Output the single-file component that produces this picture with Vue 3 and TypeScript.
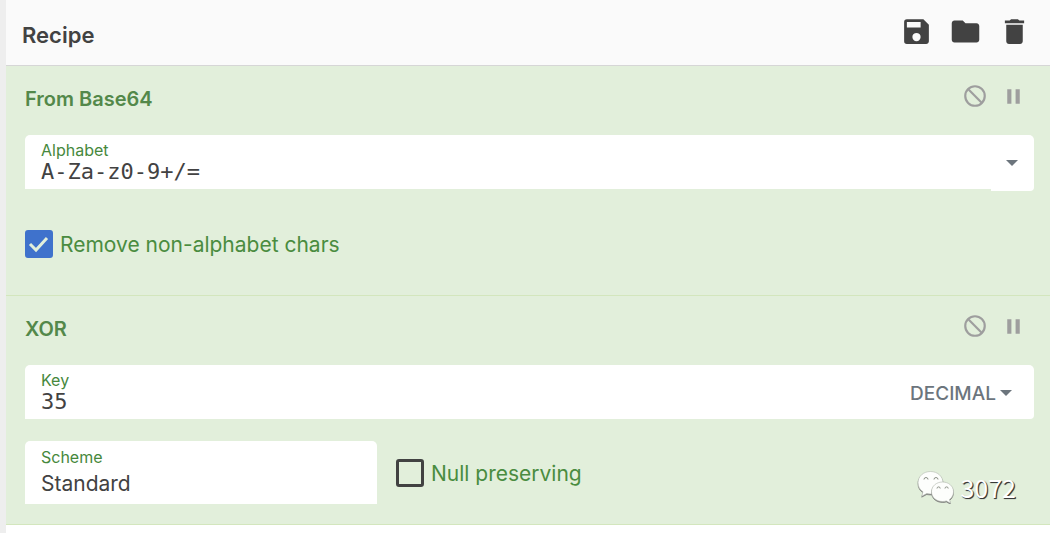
<script setup lang="ts">
import { ref } from 'vue'

const alphabet = ref('A-Za-z0-9+/=')
const removeChars = ref(true)
const key = ref('35')
const scheme = ref('Standard')
const nullPreserving = ref(false)
</script>

<template>
  <main class="recipe">
    <header class="title-bar">
      <h1>Recipe</h1>
      <div class="tools">
        <button type="button" aria-label="Save recipe">
          <svg viewBox="0 0 24 24"><path d="M17 3H5a2 2 0 0 0-2 2v14a2 2 0 0 0 2 2h14c1.100 0 2-.9 2-2V7l-4-4zm-5 16a3 3 0 1 1 0-6 3 3 0 0 1 0 6zm3-10H5V5h10v4z" /></svg>
        </button>
        <button type="button" aria-label="Load recipe">
          <svg viewBox="0 0 24 24"><path d="M10 4H4c-1.100 0-2 .9-2 2v12c0 1.100.9 2 2 2h16c1.100 0 2-.9 2-2V8c0-1.100-.9-2-2-2h-8l-2-2z" /></svg>
        </button>
        <button type="button" aria-label="Clear recipe">
          <svg viewBox="0 0 24 24"><path d="M6 19c0 1.100.9 2 2 2h8c1.100 0 2-.9 2-2V7H6v12zM19 4h-3.500l-1-1h-5l-1 1H5v2h14V4z" /></svg>
        </button>
      </div>
    </header>

    <section class="operation first">
      <div class="op-head">
        <h2>From Base64</h2>
        <div class="op-tools">
          <button type="button" aria-label="Disable operation">
            <svg viewBox="0 0 24 24"><circle cx="12" cy="12" r="9" /><path d="M5.600 5.600l12.800 12.800" /></svg>
          </button>
          <button type="button" aria-label="Set breakpoint">
            <svg class="solid" viewBox="0 0 24 24"><path d="M6 5h4v14H6zM14 5h4v14h-4z" /></svg>
          </button>
        </div>
      </div>
      <div class="field-row">
        <div class="field">
          <label for="alphabet">Alphabet</label>
          <input id="alphabet" v-model="alphabet" class="mono" type="text" spellcheck="false" />
        </div>
        <button type="button" class="menu narrow" aria-label="Choose alphabet"><span class="caret"></span></button>
      </div>
      <label class="check">
        <input v-model="removeChars" type="checkbox" />
        <svg viewBox="0 0 28 28"><path d="M5 14l6 6L22 8" /></svg>
        <span>Remove non-alphabet chars</span>
      </label>
    </section>

    <section class="operation">
      <div class="op-head">
        <h2>XOR</h2>
        <div class="op-tools">
          <button type="button" aria-label="Disable operation">
            <svg viewBox="0 0 24 24"><circle cx="12" cy="12" r="9" /><path d="M5.600 5.600l12.800 12.800" /></svg>
          </button>
          <button type="button" aria-label="Set breakpoint">
            <svg class="solid" viewBox="0 0 24 24"><path d="M6 5h4v14H6zM14 5h4v14h-4z" /></svg>
          </button>
        </div>
      </div>
      <div class="field-row">
        <div class="field">
          <label for="key">Key</label>
          <input id="key" v-model="key" class="mono" type="text" />
        </div>
        <button type="button" class="menu">DECIMAL<span class="caret"></span></button>
      </div>
      <div class="options">
        <div class="field scheme">
          <label for="scheme">Scheme</label>
          <select id="scheme" v-model="scheme">
            <option>Standard</option>
          </select>
        </div>
        <label class="check">
          <input v-model="nullPreserving" type="checkbox" />
          <svg viewBox="0 0 28 28"><path d="M5 14l6 6L22 8" /></svg>
          <span>Null preserving</span>
        </label>
      </div>
      <div class="badge">
        <svg viewBox="0 0 38 34">
          <g class="bubble">
            <path d="M13.500 1.500C6.500 1.500 1 6.300 1 12.700c0 4 1.800 7 5 9.100l-1.300 4.400 5.100-2.700c1.200.3 2.400.5 3.700.5C20.500 24 26 19 26 12.700S20.500 1.500 13.500 1.500z" />
            <path d="M25.500 12C19.200 12 14.500 16.300 14.500 21.700s4.700 9.800 11 9.800c1.300 0 2.600-.2 3.800-.6l4.200 2.300-1-3.800c2.600-1.800 4-4.600 4-7.700 0-5.500-4.700-9.700-11-9.700z" />
          </g>
          <path class="eye" d="M7 9.500a2 2 0 0 1 4 0M17 9.500a2 2 0 0 1 4 0M20 18.500a1.600 1.600 0 0 1 3.200 0M28 18.500a1.600 1.600 0 0 1 3.200 0" />
        </svg>
        <span>3072</span>
      </div>
    </section>
  </main>
</template>

<style>
body {
  background: #fff;
}
</style>

<style scoped>
* {
  box-sizing: border-box;
}
.recipe {
  min-height: 100vh;
  border-left: 6px solid #eee;
  font-family: Inter, "Liberation Sans", sans-serif;
  color: #424242;
}
button {
  display: flex;
  align-items: center;
  justify-content: center;
  padding: 0;
  border: 0;
  background: none;
  font: inherit;
  color: inherit;
}
h1,
h2 {
  margin: 0;
}
.title-bar {
  display: flex;
  align-items: center;
  justify-content: space-between;
  height: 66px;
  padding: 5px 19px 0 16px;
  border-bottom: 1px solid #d6d6d6;
  background: #fafafa;
}
h1 {
  font-size: 22px;
  line-height: 30px;
  font-weight: 600;
}
.tools {
  display: flex;
  gap: 16px;
  padding-bottom: 8px;
}
.tools svg {
  width: 33px;
  height: 33px;
  fill: #424242;
}
.operation {
  position: relative;
  padding: 18px 16px 20px 19px;
  border-bottom: 1px solid #d3e6bd;
  background: #e2efdb;
}
.first {
  height: 230px;
}
.op-head {
  display: flex;
  justify-content: space-between;
  height: 51px;
}
h2 {
  font-size: 20px;
  line-height: 30px;
  font-weight: 600;
  color: #53884a;
}
.op-tools {
  display: flex;
  gap: 13px;
  height: 24px;
  padding-right: 8px;
}
.op-tools svg {
  width: 26px;
  height: 26px;
  fill: none;
  stroke: #9e9e9e;
  stroke-width: 2;
}
.op-tools .solid {
  width: 25px;
  height: 25px;
  fill: #9e9e9e;
  stroke: none;
}
.field-row {
  display: flex;
  align-items: flex-start;
}
.field {
  flex: 1;
  display: flex;
  flex-direction: column;
  height: 54px;
  padding: 5px 16px 0;
  border-radius: 5px 0 0 0;
  background: #fff;
}
.field label {
  font-size: 16px;
  line-height: 20px;
  color: #46883c;
}
.field input,
.field select {
  width: 100%;
  height: 24px;
  padding: 0;
  border: 0;
  outline: 0;
  background: none;
  appearance: none;
  font: 21px/24px Inter, "Liberation Sans", sans-serif;
  color: #424242;
}
.field .mono {
  font: 22px/24px "DejaVu Sans Mono", "Liberation Mono", monospace;
}
.menu {
  width: 144px;
  height: 54px;
  padding: 2px 2px 0 0;
  gap: 4px;
  border-radius: 0 5px 4px 0;
  background: #fff;
  font-size: 19px;
  font-weight: 500;
  color: #6c757d;
}
.narrow {
  width: 43px;
  height: 56px;
  padding-top: 0;
}
.caret {
  border: 6px solid transparent;
  border-top-color: #6c757d;
  border-bottom: 0;
}
.check {
  position: relative;
  display: flex;
  align-items: center;
  gap: 7px;
  font-size: 21px;
  line-height: 26px;
  color: #4a8c40;
}
.check span {
  padding-top: 2px;
}
.first .check {
  width: fit-content;
  margin-top: 39px;
}
.check input {
  width: 28px;
  height: 28px;
  margin: 0;
  border: 3px solid #424242;
  border-radius: 3px;
  appearance: none;
}
.check input:checked {
  border-color: #3f72cc;
  background: #3f72cc;
}
.check svg {
  position: absolute;
  left: 0;
  width: 28px;
  height: 28px;
  fill: none;
  stroke: #e2efdb;
  stroke-width: 3;
  visibility: hidden;
}
.check input:checked + svg {
  visibility: visible;
}
.options {
  display: flex;
  align-items: center;
  gap: 19px;
  margin-top: 22px;
}
.scheme {
  flex: 0 1 352px;
  height: 63px;
  padding-top: 6px;
  gap: 5px;
  border-radius: 5px 5px 0 0;
}
.badge {
  position: absolute;
  right: 34px;
  bottom: 20px;
  display: flex;
  align-items: center;
  gap: 5px;
  font: 25px/34px "Noto Sans CJK SC", "Noto Sans", sans-serif;
  color: #fff;
  text-shadow: 1px 1px 1px #333, 1px 1px 0 #666;
}
.badge svg {
  width: 38px;
  height: 34px;
}
.bubble path {
  fill: #fdfefc;
  filter: drop-shadow(0 1px 0 #777);
  stroke: #b4bbb0;
  stroke-width: 0.6;
}
.eye {
  fill: none;
  stroke: #8a9085;
  stroke-width: 1;
}
</style>
